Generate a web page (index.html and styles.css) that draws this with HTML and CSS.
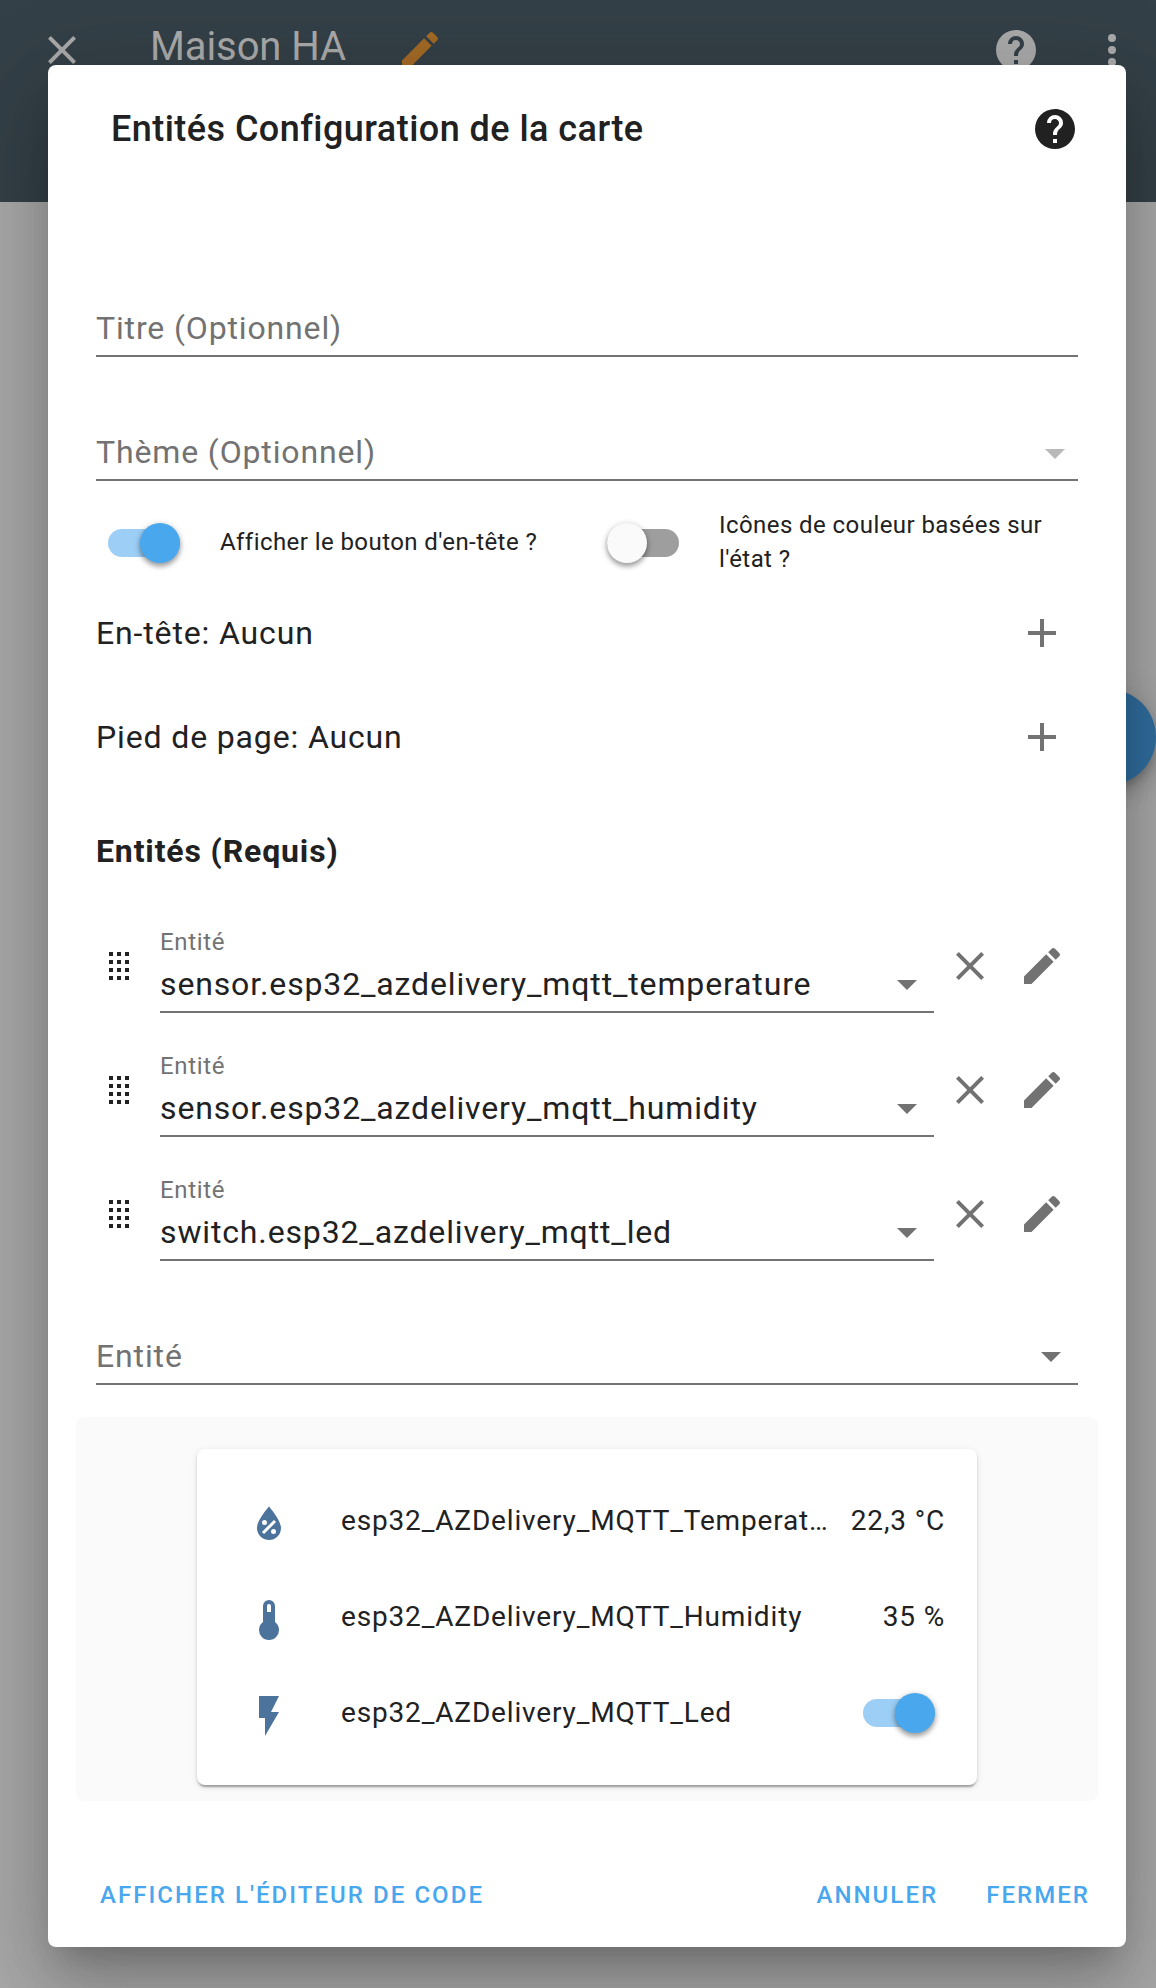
FILE: index.html
```html
<!DOCTYPE html>
<html lang="fr">
<head>
<meta charset="utf-8">
<title>Maison HA</title>
<link rel="stylesheet" href="styles.css">
</head>
<body>
<svg class="sprite" aria-hidden="true">
  <symbol id="close" viewBox="0 0 24 24"><path d="M19,6.41L17.59,5L12,10.59L6.41,5L5,6.41L10.59,12L5,17.59L6.41,19L12,13.41L17.59,19L19,17.59L13.41,12L19,6.41Z"/></symbol>
  <symbol id="pencil" viewBox="0 0 24 24"><path d="M20.71,7.04C21.1,6.65 21.1,6 20.71,5.63L18.37,3.29C18,2.9 17.35,2.9 16.96,3.29L15.12,5.12L18.87,8.87M3,17.25V21H6.75L17.81,9.93L14.06,6.18L3,17.25Z"/></symbol>
  <symbol id="help" viewBox="0 0 24 24"><path d="M15.07,11.25L14.17,12.17C13.45,12.89 13,13.5 13,15H11V14.5C11,13.39 11.45,12.39 12.17,11.67L13.41,10.41C13.78,10.05 14,9.55 14,9C14,7.89 13.1,7 12,7A2,2 0 0,0 10,9H8A4,4 0 0,1 12,5A4,4 0 0,1 16,9C16,9.88 15.64,10.67 15.07,11.25M13,19H11V17H13M12,2A10,10 0 0,0 2,12A10,10 0 0,0 12,22A10,10 0 0,0 22,12C22,6.47 17.5,2 12,2Z"/></symbol>
  <symbol id="dots" viewBox="0 0 24 24"><path d="M12,16A2,2 0 0,1 14,18A2,2 0 0,1 12,20A2,2 0 0,1 10,18A2,2 0 0,1 12,16M12,10A2,2 0 0,1 14,12A2,2 0 0,1 12,14A2,2 0 0,1 10,12A2,2 0 0,1 12,10M12,4A2,2 0 0,1 14,6A2,2 0 0,1 12,8A2,2 0 0,1 10,6A2,2 0 0,1 12,4Z"/></symbol>
  <symbol id="plus" viewBox="0 0 24 24"><path d="M19,13H13V19H11V13H5V11H11V5H13V11H19V13Z"/></symbol>
  <symbol id="down" viewBox="0 0 24 24"><path d="M7,10L12,15L17,10H7Z"/></symbol>
  <symbol id="drag" viewBox="0 0 24 24"><path d="M7,19V17H9V19H7M11,19V17H13V19H11M15,19V17H17V19H15M7,15V13H9V15H7M11,15V13H13V15H11M15,15V13H17V15H15M7,11V9H9V11H7M11,11V9H13V11H11M15,11V9H17V11H15M7,7V5H9V7H7M11,7V5H13V7H11M15,7V5H17V7H15Z"/></symbol>
  <symbol id="humidity" viewBox="0 0 24 24"><path d="M12,3.25C12,3.25 6,10 6,14C6,17.32 8.69,20 12,20A6,6 0 0,0 18,14C18,10 12,3.25 12,3.25M14.47,9.97L15.53,11.03L9.53,17.03L8.47,15.97M9.75,10A1.25,1.25 0 0,1 11,11.25A1.25,1.25 0 0,1 9.75,12.5A1.25,1.25 0 0,1 8.5,11.25A1.25,1.25 0 0,1 9.75,10M14.25,14.5A1.25,1.25 0 0,1 15.5,15.75A1.25,1.25 0 0,1 14.25,17A1.25,1.25 0 0,1 13,15.75A1.25,1.25 0 0,1 14.25,14.5Z" fill-rule="evenodd"/></symbol>
  <symbol id="thermometer" viewBox="0 0 24 24"><path d="M15 13V5A3 3 0 0 0 9 5V13A5 5 0 1 0 15 13M12 4A1 1 0 0 1 13 5V8H11V5A1 1 0 0 1 12 4Z"/></symbol>
  <symbol id="flash" viewBox="0 0 24 24"><path d="M7,2V13H10V22L17,10H13L17,2H7Z"/></symbol>
</svg>

<header class="app-bar">
  <div class="toolbar">
    <svg class="icon"><use href="#close"/></svg>
    <span class="app-title">Maison HA</span>
    <svg class="icon app-edit"><use href="#pencil"/></svg>
    <svg class="icon app-help"><use href="#help"/></svg>
    <svg class="icon"><use href="#dots"/></svg>
  </div>
</header>
<div class="fab"></div>

<main class="dialog">
  <header class="dialog-head">
    <h1>Entités Configuration de la carte</h1>
    <svg class="icon"><use href="#help"/></svg>
  </header>

  <section class="form">
    <div class="field empty"><span class="value">Titre (Optionnel)</span></div>
    <div class="field empty theme"><span class="value">Thème (Optionnel)</span><svg class="icon"><use href="#down"/></svg></div>

    <div class="toggles">
      <label class="toggle"><span class="switch on"></span><span>Afficher le bouton d'en-tête ?</span></label>
      <label class="toggle"><span class="switch"></span><span>Icônes de couleur basées sur l'état ?</span></label>
    </div>

    <div class="part"><span>En-tête: Aucun</span><svg class="icon"><use href="#plus"/></svg></div>
    <div class="part"><span>Pied de page: Aucun</span><svg class="icon"><use href="#plus"/></svg></div>

    <h2>Entités (Requis)</h2>

    <div class="entity">
      <svg class="icon handle"><use href="#drag"/></svg>
      <div class="picker"><span class="caption">Entité</span><div class="line"><span class="value">sensor.esp32_azdelivery_mqtt_temperature</span><svg class="icon"><use href="#down"/></svg></div></div>
      <svg class="icon action"><use href="#close"/></svg>
      <svg class="icon action"><use href="#pencil"/></svg>
    </div>
    <div class="entity">
      <svg class="icon handle"><use href="#drag"/></svg>
      <div class="picker"><span class="caption">Entité</span><div class="line"><span class="value">sensor.esp32_azdelivery_mqtt_humidity</span><svg class="icon"><use href="#down"/></svg></div></div>
      <svg class="icon action"><use href="#close"/></svg>
      <svg class="icon action"><use href="#pencil"/></svg>
    </div>
    <div class="entity">
      <svg class="icon handle"><use href="#drag"/></svg>
      <div class="picker"><span class="caption">Entité</span><div class="line"><span class="value">switch.esp32_azdelivery_mqtt_led</span><svg class="icon"><use href="#down"/></svg></div></div>
      <svg class="icon action"><use href="#close"/></svg>
      <svg class="icon action"><use href="#pencil"/></svg>
    </div>

    <div class="field empty"><span class="value">Entité</span><svg class="icon"><use href="#down"/></svg></div>
  </section>

  <section class="preview">
    <div class="card">
      <div class="state"><svg class="icon"><use href="#humidity"/></svg><span class="name">esp32_AZDelivery_MQTT_Temperat…</span><span>22,3 °C</span></div>
      <div class="state"><svg class="icon"><use href="#thermometer"/></svg><span class="name">esp32_AZDelivery_MQTT_Humidity</span><span>35 %</span></div>
      <div class="state"><svg class="icon"><use href="#flash"/></svg><span class="name">esp32_AZDelivery_MQTT_Led</span><span class="switch on"></span></div>
    </div>
  </section>

  <footer class="buttons">
    <button>AFFICHER L'ÉDITEUR DE CODE</button>
    <button class="cancel">ANNULER</button>
    <button>FERMER</button>
  </footer>
</main>
</body>
</html>
```
FILE: styles.css
```css
* { box-sizing: border-box; }

body {
  margin: 0;
  position: relative;
  width: 1156px;
  height: 1988px;
  overflow: hidden;
  background: #a9a9a9;
  color: #212121;
  font: 32px/40px Roboto, sans-serif;
  letter-spacing: 0.86px;
}

.sprite { position: absolute; width: 0; height: 0; }
.icon { width: 48px; height: 48px; flex: none; fill: currentColor; }

.app-bar { height: 202px; background: #344047; color: #aaa; }
.toolbar { display: flex; align-items: center; height: 100px; padding: 0 20px 0 38px; }
.app-title { margin: -6px 0 0 64px; font-size: 40px; letter-spacing: -0.1px; }
.app-edit { margin-left: 50px; color: #a46a26; }
.app-help { margin-left: auto; margin-right: 48px; }

.fab {
  position: absolute;
  left: 1060px;
  top: 689px;
  width: 96px;
  height: 96px;
  border-radius: 50%;
  background: #306e9f;
  box-shadow: 0 6px 10px -2px rgba(0,0,0,.2), 0 12px 20px rgba(0,0,0,.14), 0 2px 36px rgba(0,0,0,.12);
}

.dialog {
  position: absolute;
  left: 48px;
  top: 65px;
  width: 1078px;
  height: 1882px;
  display: flex;
  flex-direction: column;
  border-radius: 8px;
  background: #fff;
  box-shadow: 0 22px 30px -14px rgba(0,0,0,.2), 0 48px 76px 6px rgba(0,0,0,.14), 0 18px 92px 16px rgba(0,0,0,.12);
}

.dialog-head {
  display: flex;
  align-items: center;
  justify-content: space-between;
  height: 128px;
  padding: 0 47px 0 63px;
}
h1 { margin: 0; font-size: 36px; font-weight: 500; letter-spacing: 0.45px; }

.form { padding: 40px 48px 0; }
.field { display: flex; align-items: flex-end; height: 124px; padding-bottom: 7px; border-bottom: 2px solid #737373; }
.value { flex: 1; }
.field .icon, .line .icon { margin: -4px 3px; color: #727272; }
.empty { color: #727272; }
.theme .icon { margin: 0 -1px -5px 0; color: #b9b9b9; }

.toggles { display: grid; grid-template-columns: 499px 1fr; height: 100px; padding: 24px 0 0 12px; font-size: 24px; line-height: 34px; letter-spacing: 0.43px; }
.toggle { display: flex; align-items: center; gap: 40px; }
.toggle > :last-child { margin-top: -2px; }

.switch { position: relative; flex: none; width: 72px; height: 28px; border-radius: 14px; background: #9e9e9e; }
.switch::after {
  content: "";
  position: absolute;
  left: 0;
  top: -6px;
  width: 40px;
  height: 40px;
  border-radius: 50%;
  background: #fafafa;
  box-shadow: 0 2px 6px rgba(0,0,0,.35), 0 4px 4px rgba(0,0,0,.14);
}
.switch.on { background: #9dcff6; }
.switch.on::after { left: 32px; background: #49a7ee; }

.part { display: flex; align-items: center; justify-content: space-between; height: 104px; padding-right: 12px; }
.part .icon, .action { color: #727272; }

h2 { height: 100px; margin: 0; padding-top: 42px; font-size: 32px; font-weight: 700; }

.entity { display: flex; align-items: center; height: 124px; padding-top: 30px; }
.handle { margin: 0 17px 0 -1px; }
.picker { flex: 1; height: 94px; padding-top: 7px; border-bottom: 2px solid #737373; }
.caption { display: block; margin-bottom: 6px; color: #727272; font-size: 24px; line-height: 32px; letter-spacing: 0.66px; }
.line { display: flex; align-items: center; height: 40px; }
.action { margin: 0 12px; }

.preview { margin: 32px 28px 0; height: 384px; padding: 32px 121px 16px; border-radius: 8px; background: #fafafa; }
.card {
  height: 336px;
  padding: 24px 32px 24px 48px;
  border-radius: 8px;
  background: #fff;
  box-shadow: 0 4px 2px -2px rgba(0,0,0,.2), 0 2px 2px rgba(0,0,0,.14), 0 2px 6px rgba(0,0,0,.12);
}
.state { display: flex; align-items: center; height: 96px; font-size: 28px; letter-spacing: 0.84px; }
.state .icon { margin: 6px 48px 0 0; color: #4b739c; }
.name { flex: 1; white-space: nowrap; }
.state .switch { margin-right: 10px; }

.buttons { display: flex; align-items: center; height: 104px; margin-top: auto; padding: 0 36px 0 52px; }
button { padding: 0; border: 0; background: none; color: #49a7ee; font: 500 24px/40px Roboto, sans-serif; letter-spacing: 2.05px; }
.cancel { margin: 0 48px 0 auto; }
```
